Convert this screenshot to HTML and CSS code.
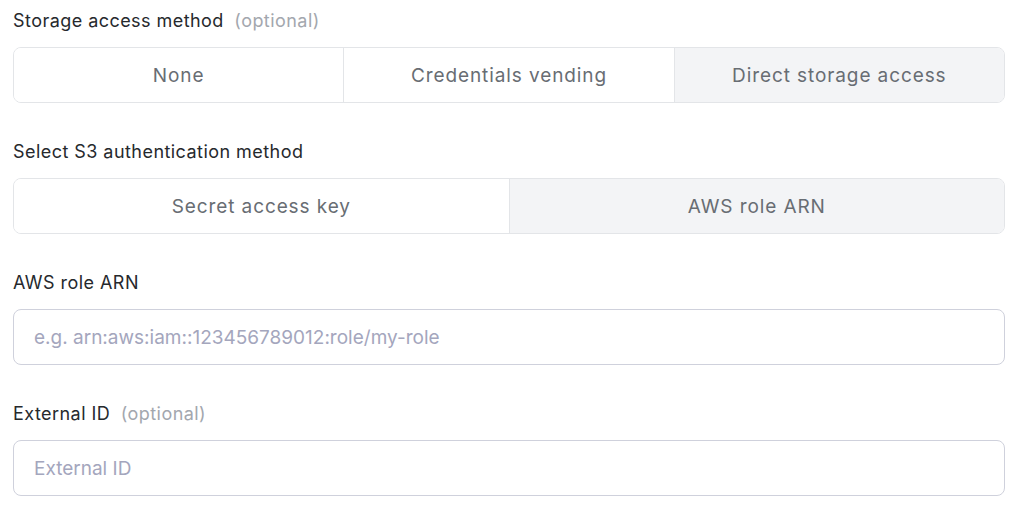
FILE: index.html
```html
<!DOCTYPE html>
<html lang="en">
<head>
<meta charset="utf-8">
<link rel="stylesheet" href="styles.css">
</head>
<body>
<form class="form">
  <div class="field">
    <div class="label">Storage access method <span class="opt">(optional)</span></div>
    <div class="seg seg-3">
      <button type="button" class="seg-btn">None</button>
      <button type="button" class="seg-btn">Credentials vending</button>
      <button type="button" class="seg-btn active">Direct storage access</button>
    </div>
  </div>
  <div class="field">
    <div class="label">Select S3 authentication method</div>
    <div class="seg seg-2">
      <button type="button" class="seg-btn">Secret access key</button>
      <button type="button" class="seg-btn active">AWS role ARN</button>
    </div>
  </div>
  <div class="field">
    <div class="label">AWS role ARN</div>
    <input class="input" type="text" placeholder="e.g. arn:aws:iam::123456789012:role/my-role">
  </div>
  <div class="field">
    <div class="label">External ID <span class="opt">(optional)</span></div>
    <input class="input" type="text" placeholder="External ID">
  </div>
</form>
</body>
</html>
```
FILE: styles.css
```css
html, body {
  margin: 0;
  padding: 0;
  background: #ffffff;
}
body {
  font-family: Inter, "Noto Sans", sans-serif;
}
.form {
  display: flex;
  flex-direction: column;
  gap: 37px;
  padding: 9px 19px 0 13px;
}
.field {
  display: flex;
  flex-direction: column;
  gap: 14px;
}
.label {
  font-size: 18px;
  line-height: 24px;
  letter-spacing: 0.45px;
  color: #26292d;
}
.opt {
  color: #a3a7ae;
  margin-left: 5px;
}
.seg {
  display: flex;
  height: 56px;
  box-sizing: border-box;
  border: 1px solid #e3e5e8;
  border-radius: 8px;
  overflow: hidden;
}
.seg-btn {
  flex: 1 1 0;
  border: none;
  background: #ffffff;
  font-family: inherit;
  font-size: 19px;
  font-weight: 400;
  letter-spacing: 0.9px;
  color: #686d73;
  padding: 0;
  margin: 0;
}
.seg-btn + .seg-btn {
  border-left: 1px solid #e3e5e8;
}
.seg-btn.active {
  background: #f3f4f6;
}
.input {
  height: 56px;
  box-sizing: border-box;
  border: 1px solid #cfd1dc;
  border-radius: 8px;
  padding: 0 20px;
  font-family: inherit;
  font-size: 19px;
  color: #1f2328;
  outline: none;
  margin: 0;
}
.input::placeholder {
  color: #a4a6bd;
}
```
